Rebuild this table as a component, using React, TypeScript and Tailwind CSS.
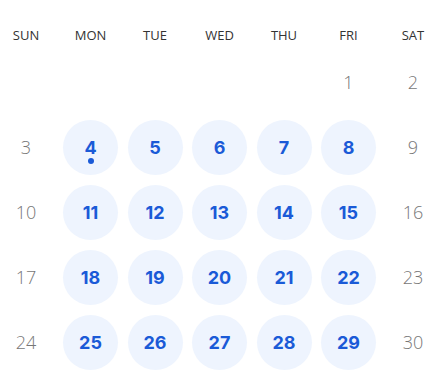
import React from "react";

const headers = ["SUN", "MON", "TUE", "WED", "THU", "FRI", "SAT"];

type Cell = { d: number | null; active?: boolean; dot?: boolean };

const rows: Cell[][] = [
  [null, null, null, null, null, 1, 2].map((d) => ({ d })),
  [3, 4, 5, 6, 7, 8, 9].map((d, i) => ({ d, active: i > 0 && i < 6, dot: d === 4 })),
  [10, 11, 12, 13, 14, 15, 16].map((d, i) => ({ d, active: i > 0 && i < 6 })),
  [17, 18, 19, 20, 21, 22, 23].map((d, i) => ({ d, active: i > 0 && i < 6 })),
  [24, 25, 26, 27, 28, 29, 30].map((d, i) => ({ d, active: i > 0 && i < 6 })),
];

export default function App() {
  return (
    <div
      className="w-[444px] h-[385px] bg-white overflow-hidden"
      style={{ fontFamily: "'Open Sans', sans-serif" }}
    >
      <div className="ml-[-1.5px] w-[442px] grid grid-cols-[repeat(7,55px)] gap-x-[9.5px]">
        {headers.map((h) => (
          <div
            key={h}
            className="h-[72px] flex items-center justify-center text-[13px] text-[#333]"
          >
            {h}
          </div>
        ))}
      </div>
      <div className="ml-[-1.5px] w-[442px] grid grid-cols-[repeat(7,55px)] gap-x-[9.5px] gap-y-[10px] mt-[-17px]">
        {rows.flat().map((c, i) => (
          <div key={i} className="h-[55px] flex items-center justify-center">
            {c.d === null ? null : c.active ? (
              <div
                className="relative w-[55px] h-[55px] rounded-full bg-[#eef4fe] flex items-center justify-center text-[18px] font-bold text-[#1a5ad7]"
                style={{ fontFamily: "Inter, sans-serif" }}
              >
                {c.d}
                {c.dot && (
                  <span className="absolute left-1/2 top-[38px] -translate-x-1/2 w-[6px] h-[6px] rounded-full bg-[#1a5ad7]" />
                )}
              </div>
            ) : (
              <span className="text-[18px] text-[#777] font-light">{c.d}</span>
            )}
          </div>
        ))}
      </div>
    </div>
  );
}
